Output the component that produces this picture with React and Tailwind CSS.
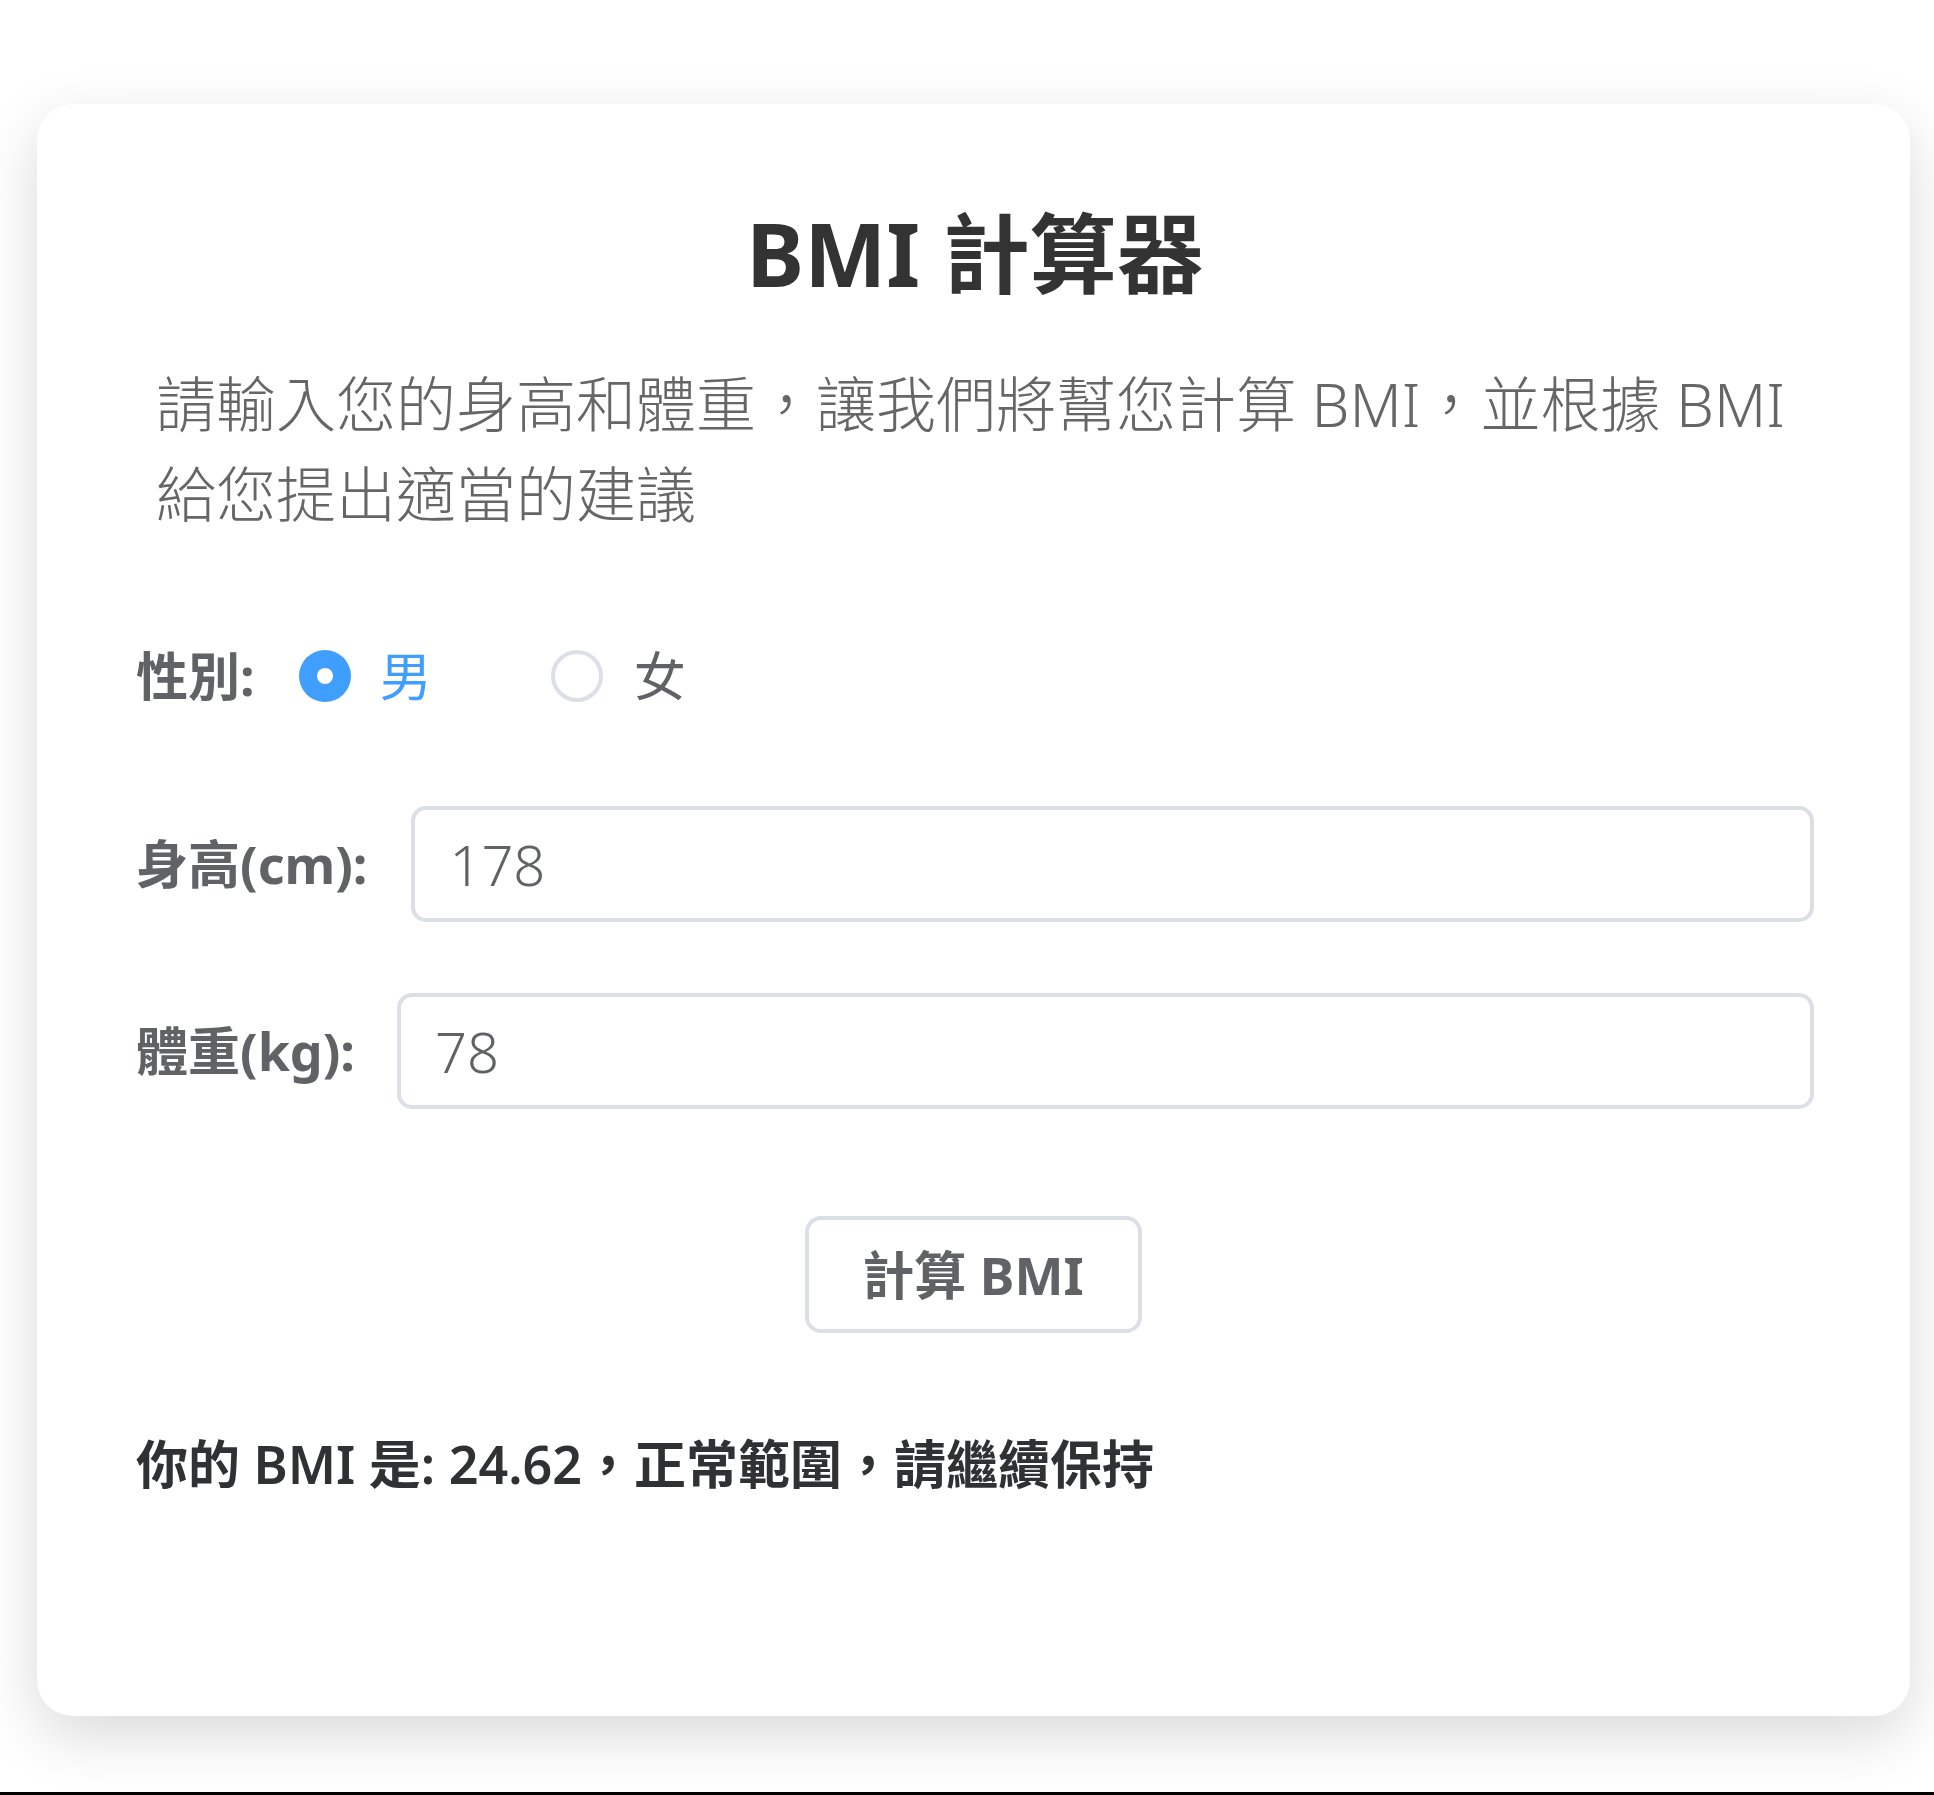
export default function App() {
  const font = { fontFamily: '"Noto Sans", "Noto Sans CJK TC", sans-serif' };
  return (
    <div className="min-h-[1795px] bg-white flex flex-col" style={font}>
      <div className="flex-1 pt-[104px] pl-[37px] pr-[24px]">
        {/* 卡片 */}
        <div className="h-[1612px] rounded-[36px] bg-white shadow-[0_20px_60px_rgba(0,0,0,0.15)] pl-[99px] pr-[96px] pt-[96px]">
          <h1 className="text-center text-[87px] leading-[106px] font-bold text-[#333]">BMI 計算器</h1>
          <p className="mt-[53px] px-[20px] text-[60px] leading-[90px] font-light text-[#666]">
            請輸入您的身高和體重，讓我們將幫您計算 BMI，並根據 BMI 給您提出適當的建議
          </p>

          {/* 性別 */}
          <div className="mt-[107px] h-[60px] flex items-center text-[52px]">
            <span className="mr-[44px] font-bold text-[#606266]">性別:</span>
            <label className="flex items-center mr-[119px]">
              <span className="w-[52px] h-[52px] rounded-full bg-[#409eff] flex items-center justify-center">
                <span className="w-[16px] h-[16px] rounded-full bg-white" />
              </span>
              <span className="ml-[29px] text-[#409eff]">男</span>
            </label>
            <label className="flex items-center">
              <span className="w-[52px] h-[52px] rounded-full border-[4px] border-[#dcdfe6] bg-white" />
              <span className="ml-[31px] text-[#606266]">女</span>
            </label>
          </div>

          {/* 身高 */}
          <div className="mt-[100px] flex items-center">
            <span className="mr-[44px] whitespace-nowrap text-[52px] font-bold text-[#606266]">身高(cm):</span>
            <input
              defaultValue="178"
              className="flex-1 min-w-0 h-[116px] border-[4px] border-[#dcdfe6] rounded-[15px] px-[34px] text-[56px] font-light text-[#606266] outline-none"
            />
          </div>

          {/* 體重 */}
          <div className="mt-[71px] flex items-center">
            <span className="mr-[42px] whitespace-nowrap text-[52px] font-bold text-[#606266]">體重(kg):</span>
            <input
              defaultValue="78"
              className="flex-1 min-w-0 h-[116px] border-[4px] border-[#dcdfe6] rounded-[15px] px-[34px] text-[56px] font-light text-[#606266] outline-none"
            />
          </div>

          <div className="mt-[107px] flex justify-center pr-[4px]">
            <button className="w-[337px] h-[117px] border-[4px] border-[#dcdfe6] rounded-[16px] bg-white text-[52px] font-bold text-[#606266]">
              計算 BMI
            </button>
          </div>

          <p className="mt-[92px] text-[52px] leading-[78px] font-semibold text-[#303133]">
            你的 BMI 是: 24.62，正常範圍，請繼續保持
          </p>
        </div>
      </div>
      <div className="h-[3px] bg-black" />
    </div>
  );
}
